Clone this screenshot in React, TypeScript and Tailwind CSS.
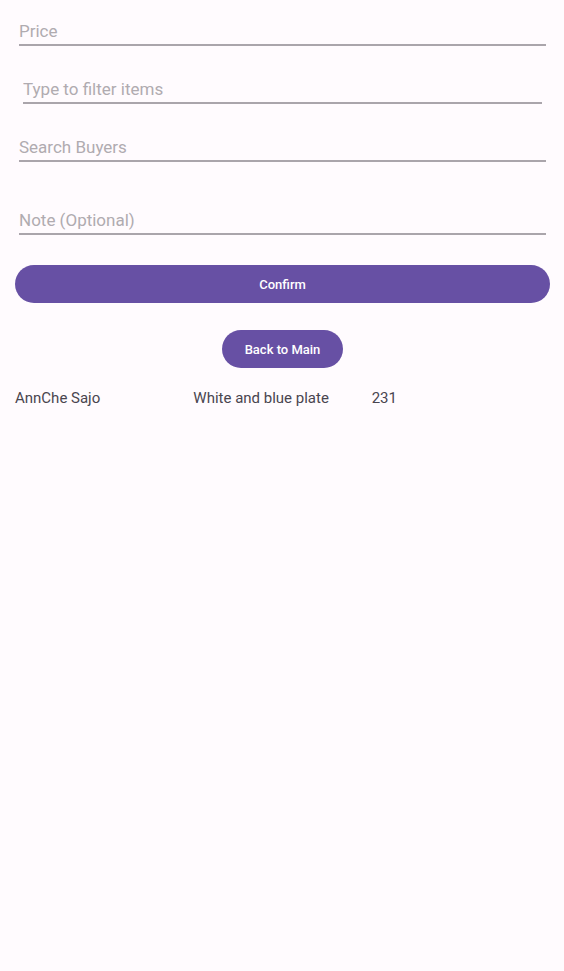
type FieldProps = {
  id: string;
  label: string;
  type?: string;
  className?: string;
};

function Field({ id, label, type = "text", className = "" }: FieldProps) {
  return (
    <div className={className}>
      <input
        id={id}
        type={type}
        aria-label={label}
        placeholder={label}
        className="block h-7 w-full appearance-none rounded-none border-b-2 border-[#aaa5ab] bg-transparent text-[17px] leading-6 text-[#49454f] outline-none placeholder:text-[#b0abb0] focus:border-[#6750a4]"
      />
    </div>
  );
}

const sales = [{ buyer: "AnnChe Sajo", item: "White and blue plate", price: 231 }];

export default function App() {
  return (
    <main className="min-h-screen bg-[#fffbfe] pt-[18px] pr-[14px] pl-[15px] font-[Roboto,sans-serif] text-[#49454f]">
      <form onSubmit={(event) => event.preventDefault()}>
        <Field id="price" label="Price" className="mx-1" />
        <Field id="items" label="Type to filter items" className="mx-2 mt-[30px]" />
        <Field id="buyers" label="Search Buyers" className="mx-1 mt-[30px]" />
        <Field id="note" label="Note (Optional)" className="mx-1 mt-[45px]" />
        <button
          type="submit"
          className="mt-[30px] block h-[38px] w-full rounded-full bg-[#6750a4] pt-0.5 text-[13px] font-medium text-white"
        >
          Confirm
        </button>
        <button
          type="button"
          className="mx-auto mt-[27px] block h-[38px] rounded-full bg-[#6750a4] px-[23px] pt-0.5 text-[13px] font-medium text-white"
        >
          Back to Main
        </button>
      </form>
      <table className="mt-5 w-full table-fixed text-left text-[15px] leading-5">
        <tbody>
          {sales.map((sale) => (
            <tr key={sale.item}>
              <td className="p-0">{sale.buyer}</td>
              <td className="p-0">{sale.item}</td>
              <td className="p-0">{sale.price}</td>
            </tr>
          ))}
        </tbody>
      </table>
    </main>
  );
}
